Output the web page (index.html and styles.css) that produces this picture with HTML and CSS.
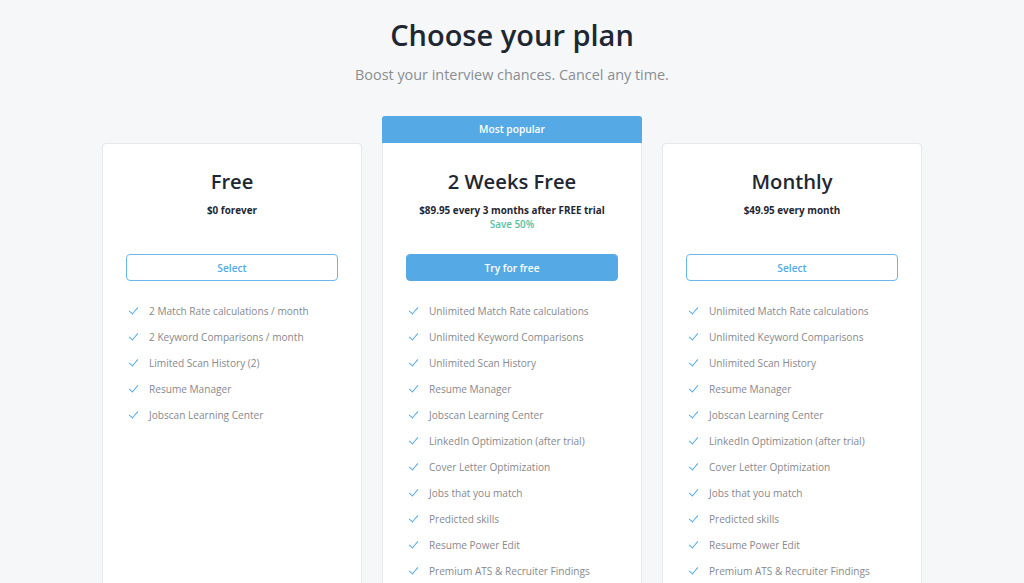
FILE: index.html
```html
<!DOCTYPE html>
<html lang="en">
<head>
  <meta charset="UTF-8">
  <meta name="viewport" content="width=device-width, initial-scale=1.0">
  <title>Choose your plan</title>
  <link rel="stylesheet" href="styles.css">
</head>
<body>
  <div class="page">
    <h1>Choose your plan</h1>
    <p class="subtitle">Boost your interview chances. Cancel any time.</p>

    <div class="plans">
      <!-- Free plan -->
      <div class="plan">
        <div class="card">
          <h2>Free</h2>
          <div class="price">
            <p>$0 forever</p>
          </div>
          <button class="btn btn-outline">Select</button>
          <ul class="features">
            <li>2 Match Rate calculations / month</li>
            <li>2 Keyword Comparisons / month</li>
            <li>Limited Scan History (2)</li>
            <li>Resume Manager</li>
            <li>Jobscan Learning Center</li>
          </ul>
        </div>
      </div>

      <!-- Popular plan -->
      <div class="plan popular">
        <div class="badge">Most popular</div>
        <div class="card">
          <h2>2 Weeks Free</h2>
          <div class="price">
            <p>$89.95 every 3 months after FREE trial</p>
            <p class="save">Save 50%</p>
          </div>
          <button class="btn btn-solid">Try for free</button>
          <ul class="features">
            <li>Unlimited Match Rate calculations</li>
            <li>Unlimited Keyword Comparisons</li>
            <li>Unlimited Scan History</li>
            <li>Resume Manager</li>
            <li>Jobscan Learning Center</li>
            <li>LinkedIn Optimization (after trial)</li>
            <li>Cover Letter Optimization</li>
            <li>Jobs that you match</li>
            <li>Predicted skills</li>
            <li>Resume Power Edit</li>
            <li>Premium ATS &amp; Recruiter Findings</li>
          </ul>
        </div>
      </div>

      <!-- Monthly plan -->
      <div class="plan">
        <div class="card">
          <h2>Monthly</h2>
          <div class="price">
            <p>$49.95 every month</p>
          </div>
          <button class="btn btn-outline">Select</button>
          <ul class="features">
            <li>Unlimited Match Rate calculations</li>
            <li>Unlimited Keyword Comparisons</li>
            <li>Unlimited Scan History</li>
            <li>Resume Manager</li>
            <li>Jobscan Learning Center</li>
            <li>LinkedIn Optimization (after trial)</li>
            <li>Cover Letter Optimization</li>
            <li>Jobs that you match</li>
            <li>Predicted skills</li>
            <li>Resume Power Edit</li>
            <li>Premium ATS &amp; Recruiter Findings</li>
          </ul>
        </div>
      </div>
    </div>
  </div>
</body>
</html>
```

FILE: styles.css
```css
body {
  font-family: "Open Sans", Arial, sans-serif;
  background-color: #f5f7f9;
  margin: 0;
  padding: 0;
  color: #1f2733;
}

.page {
  text-align: center;
  padding-top: 14px;
}

h1 {
  font-size: 29px;
  font-weight: 600;
  line-height: 42px;
  margin: 0;
  color: #1f2733;
}

.subtitle {
  font-size: 14.4px;
  color: #8a8d91;
  margin: 9px 0 0;
  line-height: 20px;
}

.plans {
  display: flex;
  justify-content: center;
  align-items: flex-start;
  gap: 20px;
  margin-top: 31px;
}

.plan {
  width: 260px;
  margin-top: 27px;
}

.plan.popular {
  margin-top: 0;
}

.badge {
  background-color: #55aae6;
  color: #fff;
  font-size: 10.2px;
  font-weight: 600;
  height: 27px;
  line-height: 27px;
  border-radius: 3px 3px 0 0;
}

.card {
  background-color: #fff;
  border: 1px solid #e4e7eb;
  border-radius: 4px;
  padding: 23px 23px 40px;
  height: 520px;
}

.popular .card {
  border-top: none;
  border-radius: 0 0 4px 4px;
  padding-top: 24px;
}

h2 {
  font-size: 20.2px;
  font-weight: 600;
  line-height: 28px;
  margin: 0;
}

.price {
  height: 51px;
  margin-top: 8px;
}

.price p {
  margin: 0;
  font-size: 9.9px;
  font-weight: 700;
  line-height: 14px;
}

.price .save {
  color: #4fc3a1;
  font-weight: 600;
}

.btn {
  display: block;
  width: 100%;
  height: 27px;
  border-radius: 4px;
  font-family: inherit;
  font-size: 10.2px;
  font-weight: 600;
  cursor: pointer;
}

.btn-outline {
  background-color: #fff;
  border: 1px solid #6bb6ea;
  color: #55aae6;
}

.btn-solid {
  background-color: #55aae6;
  border: 1px solid #55aae6;
  color: #fff;
}

.features {
  list-style: none;
  margin: 17px 0 0;
  padding: 0 0 0 4px;
  text-align: left;
}

.features li {
  position: relative;
  padding-left: 19px;
  font-size: 10.1px;
  line-height: 26px;
  color: #86898d;
}

.features li::before {
  content: "";
  position: absolute;
  left: -1px;
  top: 9px;
  width: 8px;
  height: 4px;
  border-left: 1.5px solid #55aae6;
  border-bottom: 1.5px solid #55aae6;
  transform: rotate(-50deg);
}
```
